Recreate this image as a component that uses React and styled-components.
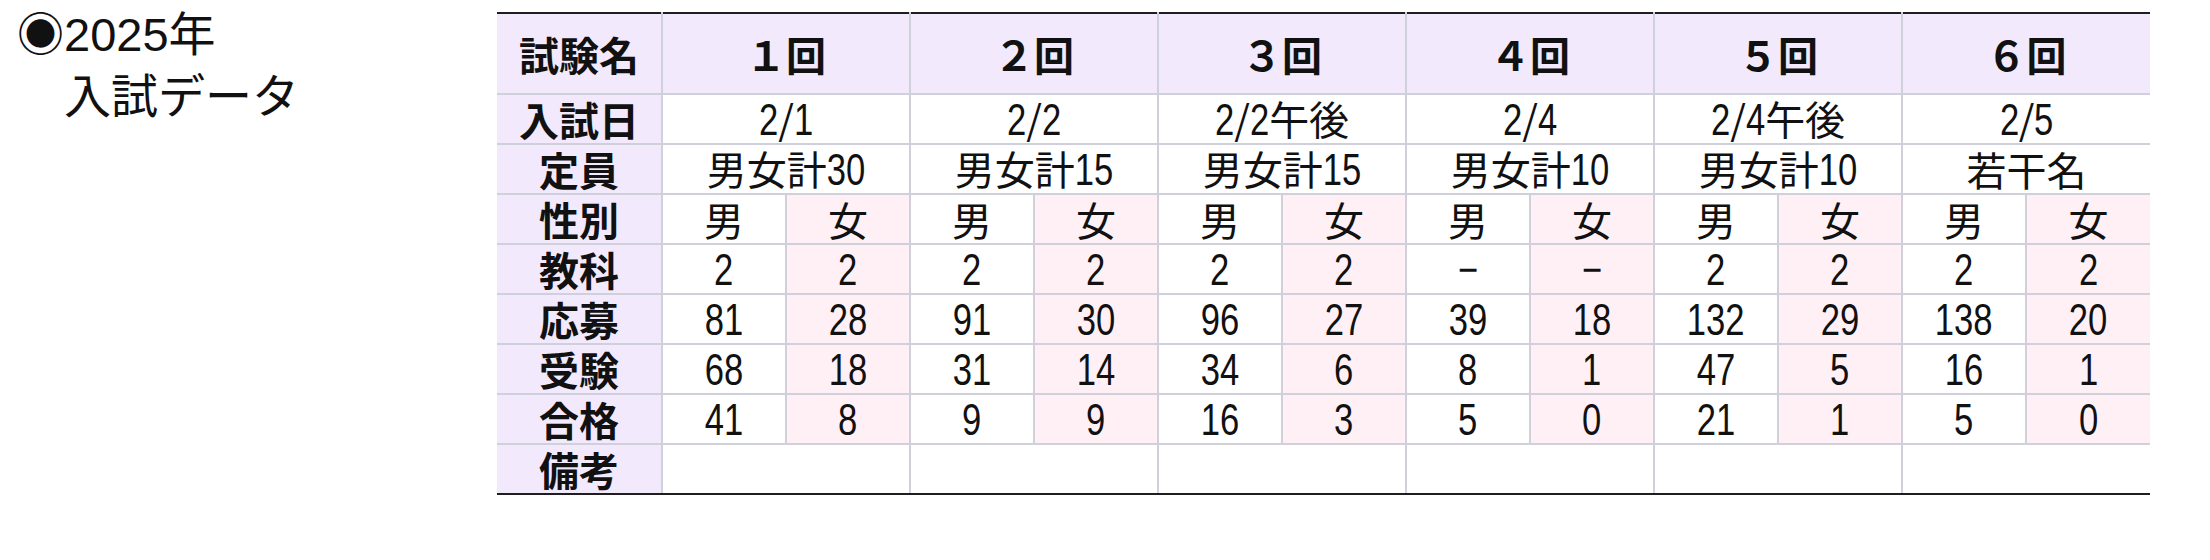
import styled, { createGlobalStyle } from "styled-components";

const GlobalStyle = createGlobalStyle`
    body {
        margin: 0;
        background: #fff;
        color: #111;
        font-family: "Liberation Sans", "Noto Sans CJK JP", sans-serif;
    }
`;

const rounds = [
    { name: "１回", date: "2/1", quota: "男女計30", subjects: ["2", "2"], applied: [81, 28], took: [68, 18], passed: [41, 8] },
    { name: "２回", date: "2/2", quota: "男女計15", subjects: ["2", "2"], applied: [91, 30], took: [31, 14], passed: [9, 9] },
    { name: "３回", date: "2/2午後", quota: "男女計15", subjects: ["2", "2"], applied: [96, 27], took: [34, 6], passed: [16, 3] },
    { name: "４回", date: "2/4", quota: "男女計10", subjects: ["−", "−"], applied: [39, 18], took: [8, 1], passed: [5, 0] },
    { name: "５回", date: "2/4午後", quota: "男女計10", subjects: ["2", "2"], applied: [132, 29], took: [47, 5], passed: [21, 1] },
    { name: "６回", date: "2/5", quota: "若干名", subjects: ["2", "2"], applied: [138, 20], took: [16, 1], passed: [5, 0] },
];

// 男女に分かれる行
const splitRows = [
    { label: "性別", key: null },
    { label: "教科", key: "subjects" },
    { label: "応募", key: "applied" },
    { label: "受験", key: "took" },
    { label: "合格", key: "passed" },
];

// 数字は細長いので縮めて描く (Arial Narrow の代わり)
const NUM_SIZE = 45;
const NUM_SCALE = 0.77;

function Text({ value }) {
    const parts = String(value).split(/([0-9−]+)/).filter(Boolean);
    return parts.map((part, i) => {
        if (!/^[0-9−]+$/.test(part)) return <span key={i}>{part}</span>;
        const width = [...part].reduce((sum, c) => sum + (c === "−" ? 0.584 : 0.556), 0) * NUM_SIZE;
        const trim = (width * (1 - NUM_SCALE)) / 2;
        return <Num key={i} style={{ margin: `0 ${-trim}px` }}>{part}</Num>;
    });
}

export default function App() {
    return (
        <Page>
            <GlobalStyle />
            <Title>
                ◉2025年<br />
                <Indent>入試データ</Indent>
            </Title>

            <Table>
                <colgroup>
                    <LabelCol />
                    {Array.from({ length: 12 }).map((_, i) => <SubCol key={i} />)}
                </colgroup>
                <tbody>
                    <HeadRow>
                        <LabelCell>試験名</LabelCell>
                        {rounds.map(r => (
                            <HeadCell key={r.name} colSpan={2}>{r.name}</HeadCell>
                        ))}
                    </HeadRow>
                    <Row>
                        <LabelCell>入試日</LabelCell>
                        {rounds.map(r => <Cell key={r.name} colSpan={2}><Text value={r.date} /></Cell>)}
                    </Row>
                    <Row>
                        <LabelCell>定員</LabelCell>
                        {rounds.map(r => <Cell key={r.name} colSpan={2}><Text value={r.quota} /></Cell>)}
                    </Row>
                    {splitRows.map(row => (
                        <Row key={row.label}>
                            <LabelCell>{row.label}</LabelCell>
                            {rounds.map(r => [
                                <Cell key={r.name + "m"}><Text value={row.key ? r[row.key][0] : "男"} /></Cell>,
                                <Cell key={r.name + "f"} $female><Text value={row.key ? r[row.key][1] : "女"} /></Cell>,
                            ])}
                        </Row>
                    ))}
                    <Row>
                        <LabelCell>備考</LabelCell>
                        {rounds.map(r => <Cell key={r.name} colSpan={2}></Cell>)}
                    </Row>
                </tbody>
            </Table>
        </Page>
    );
}

const Page = styled.div`
    display: flex;
    align-items: flex-start;
    padding: 12px 0 0 17px;
`;

const Title = styled.h1`
    width: 480px;
    margin: -8px 0 0;
    font-size: 47px;
    font-weight: normal;
    line-height: 62px;
`;

const Indent = styled.span`
    padding-left: 47px;
`;

const Table = styled.table`
    width: 1653px;
    table-layout: fixed;
    border-collapse: collapse;
    font-family: "Noto Sans CJK JP", sans-serif;
    font-size: 40px;
    line-height: 1;

    /* 上下の罫線だけ黒 */
    tr:first-child > * {
        border-top-color: #1e1e1e;
    }
    tr:last-child > * {
        border-bottom-color: #1e1e1e;
    }
`;

const LabelCol = styled.col`
    width: 165px;
`;

const SubCol = styled.col`
    width: 124px;
`;

const HeadRow = styled.tr`
    height: 81px;
    background: #f2eafc;
`;

const Row = styled.tr`
    height: 50px;
`;

const cellBase = `
    padding: 0;
    text-align: center;
    vertical-align: middle;
    white-space: nowrap;
    border: 2px solid #cfd0da;
    &:first-child { border-left: none; }
    &:last-child { border-right: none; }
`;

const LabelCell = styled.th`
    ${cellBase}
    background: #f2eafc;
    font-weight: bold;
`;

const HeadCell = styled.th`
    ${cellBase}
    font-weight: bold;
`;

const Cell = styled.td`
    ${cellBase}
    background: ${p => (p.$female ? "#fff0f6" : "#fff")};
`;

const Num = styled.span`
    display: inline-block;
    font-family: "Liberation Sans", sans-serif;
    font-size: ${NUM_SIZE}px;
    transform: scaleX(${NUM_SCALE});
`;
